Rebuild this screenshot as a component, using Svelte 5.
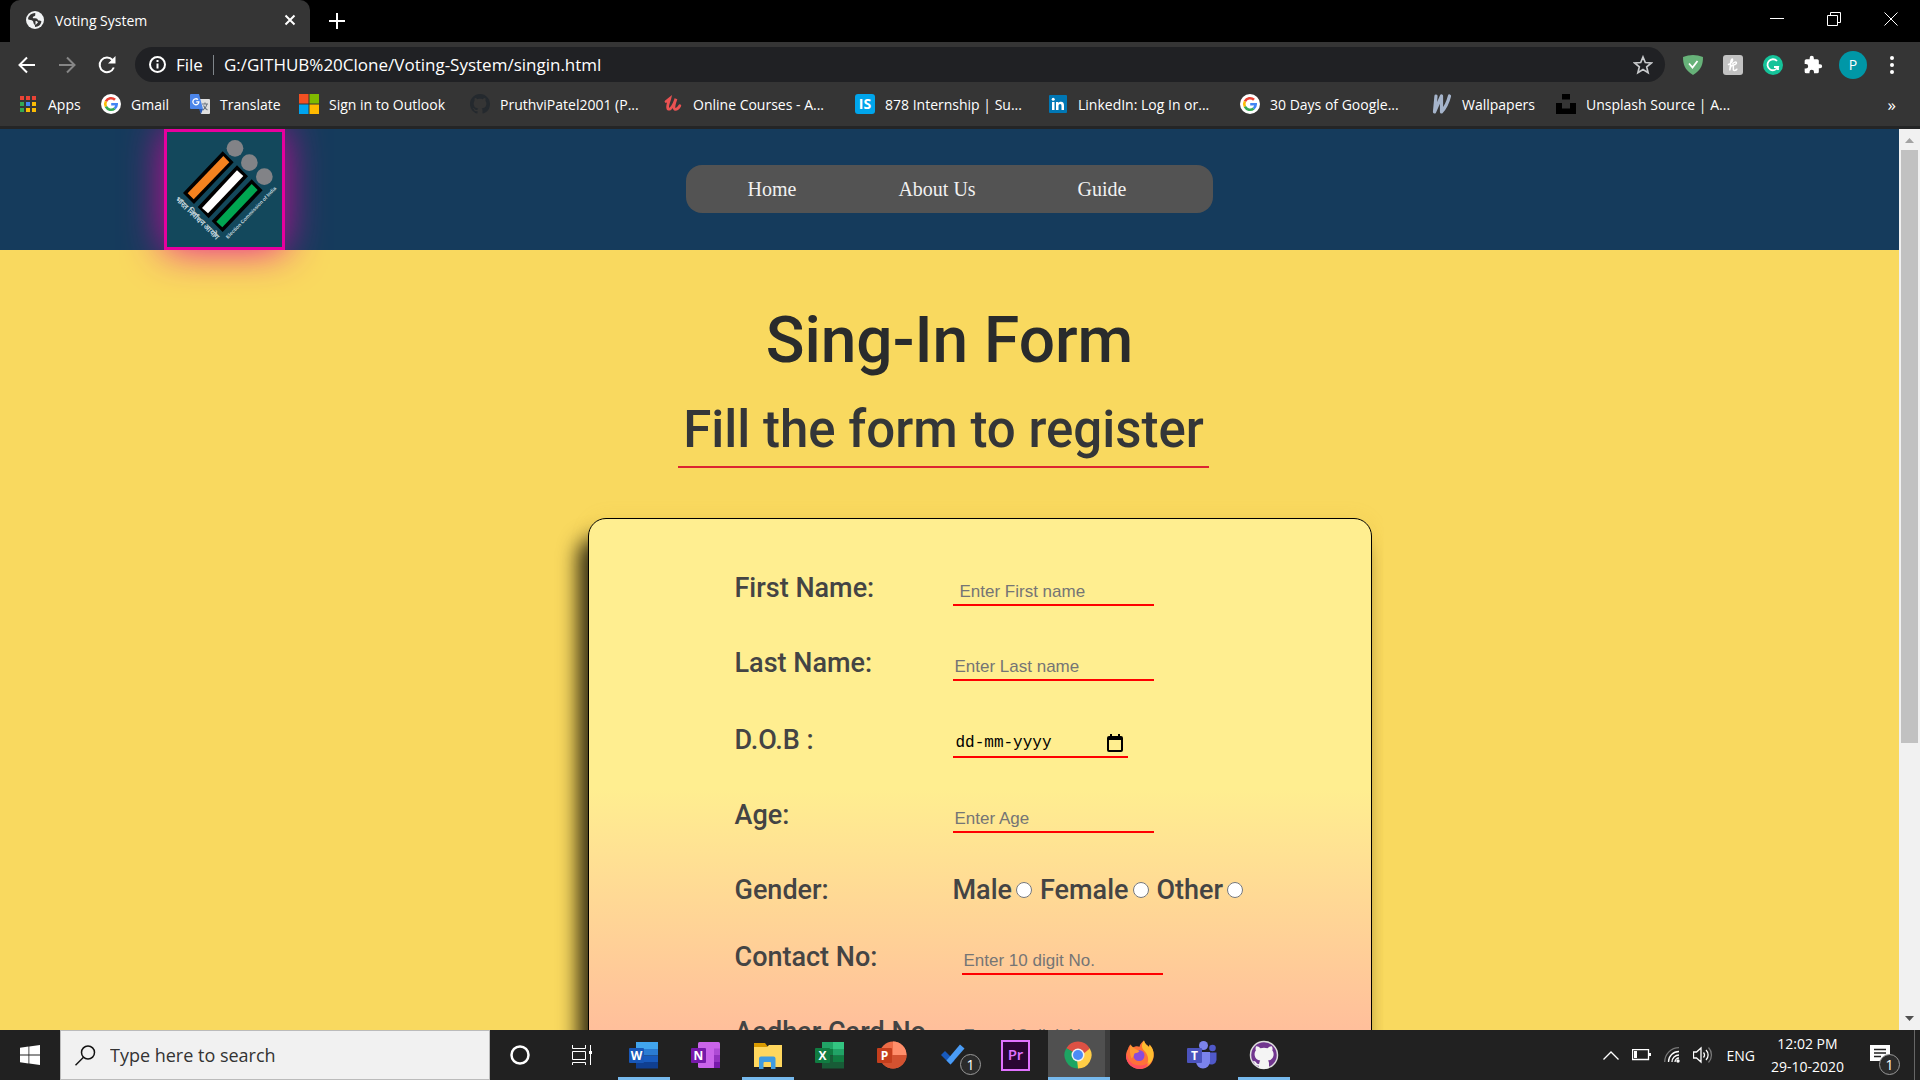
<script>
  const bookmarks = [
    { icon: 'apps', label: 'Apps' },
    { icon: 'google', label: 'Gmail' },
    { icon: 'translate', label: 'Translate' },
    { icon: 'microsoft', label: 'Sign in to Outlook' },
    { icon: 'github', label: 'PruthviPatel2001 (P...' },
    { icon: 'udemy', label: 'Online Courses - A...' },
    { icon: 'internshala', label: '878 Internship | Su...' },
    { icon: 'linkedin', label: 'LinkedIn: Log In or...' },
    { icon: 'google', label: '30 Days of Google...' },
    { icon: 'wallpapers', label: 'Wallpapers' },
    { icon: 'unsplash', label: 'Unsplash Source | A...' },
  ];

  const tasks = [
    { name: 'Word', open: true },
    { name: 'OneNote' },
    { name: 'File Explorer', open: true },
    { name: 'Excel' },
    { name: 'PowerPoint' },
    { name: 'To Do', badge: 1 },
    { name: 'Premiere Pro' },
    { name: 'Chrome', open: true, active: true },
    { name: 'Firefox' },
    { name: 'Teams' },
    { name: 'GitHub Desktop', open: true },
  ];
</script>

{#snippet octocat()}
  <path d="M8 0C3.58 0 0 3.58 0 8c0 3.54 2.29 6.53 5.47 7.59.4.07.55-.17.55-.38 0-.19-.01-.82-.01-1.49-2.01.37-2.53-.49-2.69-.94-.09-.23-.48-.94-.82-1.13-.28-.15-.68-.52-.01-.53.63-.01 1.08.58 1.23.82.72 1.21 1.87.87 2.33.66.07-.52.28-.87.51-1.07-1.78-.2-3.64-.89-3.64-3.95 0-.87.31-1.59.82-2.15-.08-.2-.36-1.02.08-2.12 0 0 .67-.21 2.2.82.64-.18 1.32-.27 2-.27s1.36.09 2 .27c1.53-1.04 2.2-.82 2.2-.82.44 1.1.16 1.92.08 2.12.51.56.82 1.27.82 2.15 0 3.07-1.87 3.75-3.65 3.95.29.25.54.73.54 1.48 0 1.07-.01 1.93-.01 2.2 0 .21.15.46.55.38A8.01 8.01 0 0 0 16 8c0-4.42-3.58-8-8-8z" />
{/snippet}

{#snippet bookmarkIcon(name)}
  <svg class="fav" viewBox="0 0 20 20" aria-hidden="true">
    {#if name === 'apps'}
      <path fill="#ea4335" d="M2 2h4v4H2zM8 2h4v4H8zM14 2h4v4h-4z" />
      <path fill="#34a853" d="M2 8h4v4H2zM2 14h4v4H2z" />
      <path fill="#4285f4" d="M8 8h4v4H8z" />
      <path fill="#fbbc05" d="M14 8h4v4h-4zM8 14h4v4H8zM14 14h4v4h-4z" />
    {:else if name === 'google'}
      <circle cx="10" cy="10" r="10" fill="#fff" />
      <g fill="none" stroke-width="2.6">
        <path stroke="#ea4335" d="M14 5.8A5.8 5.8 0 0 0 4.9 7.3" />
        <path stroke="#fbbc05" d="M4.9 7.3a5.8 5.8 0 0 0 0 5.4" />
        <path stroke="#34a853" d="M4.9 12.7a5.8 5.8 0 0 0 8.8 1.8" />
        <path stroke="#4285f4" d="M13.7 14.5a5.8 5.8 0 0 0 2-4.3h-5.5" />
      </g>
    {:else if name === 'translate'}
      <path fill="#e0e0e0" d="M8 5h11a1 1 0 0 1 1 1v13a1 1 0 0 1-1 1h-8z" />
      <path fill="#4c86ea" d="M1 0h8l4 15H1a1 1 0 0 1-1-1V1a1 1 0 0 1 1-1z" />
      <path fill="#2b59b5" d="M9 15h4l-2 5z" />
      <path fill="none" stroke="#fff" stroke-width="1.3" d="M8 5.6a3 3 0 1 0 .9 2.2H6.2" />
      <path fill="none" stroke="#6b7580" stroke-width="1.1" d="M12 10h6M15 8.6V10M17 10c-.5 3-2 4.5-4 6M13.5 11.5c1 2 2 3.5 4 4.5" />
    {:else if name === 'microsoft'}
      <path fill="#f25022" d="M0 0h9.5v9.5H0z" /><path fill="#7fba00" d="M10.5 0H20v9.5h-9.5z" />
      <path fill="#00a4ef" d="M0 10.5h9.5V20H0z" /><path fill="#ffb900" d="M10.5 10.5H20V20h-9.5z" />
    {:else if name === 'github'}
      <g fill="#24292e" transform="scale(1.25)">{@render octocat()}</g>
    {:else if name === 'udemy'}
      <path fill="none" stroke="#eb5252" stroke-width="2.8" stroke-linecap="round" d="M3 7.5 6.8 4.5C6 8 3.5 12 5 14.8c2.5 2 6-4 8-10C11.5 9 9.8 14 11.8 15.2c1.8.6 3.5-1 5-3.5" />
    {:else if name === 'internshala'}
      <rect width="20" height="20" rx="3" fill="#00a5ec" />
      <text x="10" y="15" text-anchor="middle" class="mark" font-size="14">IS</text>
    {:else if name === 'linkedin'}
      <rect x="1" y="1" width="18" height="18" rx="1" fill="#0077b5" />
      <path fill="#fff" d="M4 8h2.5v8H4zM8 8h2.4v1.2C11 8.3 12 7.8 13 7.8c2.2 0 3 1.4 3 3.8V16h-2.5v-4c0-1.3-.4-2-1.4-2s-1.6.8-1.6 2v4H8z" />
      <circle cx="5.2" cy="5.3" r="1.5" fill="#fff" />
    {:else if name === 'wallpapers'}
      <path fill="none" stroke="#a5b4cb" stroke-width="3.2" stroke-linecap="round" stroke-linejoin="round" d="M4 2 2.5 18 9.5 2 9.5 18C13 14 16 8 17.500 2" />
    {:else}
      <path fill="#000" d="M6 0h8v5.500H6zM0 9h6v5.500h8V9h6v11H0z" />
    {/if}
  </svg>
{/snippet}

{#snippet taskIcon(name)}
  <svg class="app" viewBox="0 0 32 32" aria-hidden="true">
    {#if name === 'Word' || name === 'Excel'}
      {#if name === 'Word'}
        <path fill="#41a5ee" d="M8 3h22v7H8z" /><path fill="#2b7cd3" d="M8 10h22v6.500H8z" />
        <path fill="#185abd" d="M8 16.500h22V23H8z" /><path fill="#103f91" d="M8 23h22v6.500H8z" />
        <rect x="1" y="9" width="15" height="15" rx="1" fill="#1857b8" />
      {:else}
        <path fill="#21a366" d="M8 3h11v7H8z" /><path fill="#33c481" d="M19 3h11v7H19z" />
        <path fill="#107c41" d="M8 10h11v6.500H8zM19 16.500h11V23H19z" /><path fill="#21a366" d="M19 10h11v6.500H19z" />
        <path fill="#185c37" d="M8 16.500h11V23H8zM8 23h22v6.500H8z" />
        <rect x="1" y="9" width="15" height="15" rx="1" fill="#107c41" />
      {/if}
      <text x="8.5" y="21" text-anchor="middle" class="mark" font-size="12">{name === 'Word' ? 'W' : 'X'}</text>
    {:else if name === 'OneNote'}
      <rect x="8" y="3" width="22" height="26" rx="1.5" fill="#ca64ea" />
      <path fill="#ae4bd5" d="M24 9.500h6V16h-6z" /><path fill="#9332bf" d="M24 16h6v6.500h-6z" /><path fill="#7719aa" d="M24 22.500h6V29h-6z" />
      <rect x="1" y="9" width="15" height="15" rx="1" fill="#7719aa" />
      <text x="8.5" y="21" text-anchor="middle" class="mark" font-size="12">N</text>
    {:else if name === 'File Explorer'}
      <path fill="#d99a00" d="M2 4h11l3 4v5H2z" /><path fill="#ffd75e" d="M2 8h13l2-2h13v22H2z" />
      <path fill="#3f9be0" d="M7 30V19.500a2 2 0 0 1 2-2h12.500a2 2 0 0 1 2 2V30h-4.500v-6a1 1 0 0 0-1-1h-5.500a1 1 0 0 0-1 1v6z" />
    {:else if name === 'PowerPoint'}
      <circle cx="17" cy="16" r="13.500" fill="#ed6c47" /><path fill="#ff8f6b" d="M17 2.500A13.500 13.500 0 0 1 30.500 16H17z" />
      <path fill="#d35230" d="M3.500 16h27a13.500 13.500 0 0 1-27 0z" />
      <rect x="1" y="9" width="15" height="15" rx="1" fill="#c43e1c" />
      <text x="8.5" y="21" text-anchor="middle" class="mark" font-size="12">P</text>
    {:else if name === 'To Do'}
      <path fill="#185abd" d="m3 16 4-4 9.500 9.500-4 4z" />
      <path fill="#4a9cf5" d="m12.500 25.500 14-16-4.500-4L8.500 21.500z" />
    {:else if name === 'Premiere Pro'}
      <rect x="2" y="2" width="27" height="29" fill="#2a0634" stroke="#e072ff" stroke-width="2" />
      <text x="15.5" y="21" text-anchor="middle" class="mark pr" font-size="15">Pr</text>
    {:else if name === 'Chrome'}
      <path fill="#dd5144" d="M16 16 4.300 9.200a13.500 13.500 0 0 1 23.400 0z" />
      <path fill="#ffcd46" d="M16 16 27.700 9.200A13.500 13.500 0 0 1 16 29.500z" />
      <path fill="#1da462" d="M16 16v13.500A13.500 13.500 0 0 1 4.300 9.200z" />
      <path fill="#dd5144" d="M16 9.500h11.800L20 16z" /><path fill="#ffcd46" d="m21.800 19-5.800 10.500-1-9z" /><path fill="#1da462" d="m10.200 19L4.300 9.200 12 14z" />
      <circle cx="16" cy="16" r="6.500" fill="#f1f1f1" /><circle cx="16" cy="16" r="5" fill="#4c8bf5" />
    {:else if name === 'Firefox'}
      <path fill="#ff7139" d="M4 10c.5-2 1.500-3.500 2.500-4.500.3 1.500 1 2.500 2 3.200 2-1.500 5-2 7-1C16 5 18 3 20 1.500c.5 3 3 4.500 5 6.500.5-.8.6-1.700.5-2.500 3 3 4.500 7 4.200 11.500C29.300 24 23.500 30 16 30S2 24 2 17c0-2.500.8-5 2-7z" />
      <path fill="#ffbd2f" d="M20 1.500c.5 3 3 4.500 5 6.500.5-.8.6-1.700.5-2.500 3.500 3.500 5 8.500 3.700 13.500-1.200 4-4.200 7-7.700 8.500 3.500-4 4-10-1-15.500-3.500-3-3-7.500-.5-10.500z" />
      <path fill="#ff4f5e" d="M2.300 14c1.500 8 6 12.500 14 12.500 4 0 7-1.500 9-3.500C23 27.500 19.500 30 16 30 8.500 30 2 24 2 17z" />
      <circle cx="15" cy="16.500" r="5.500" fill="#8a4bdb" /><path fill="#ff9a35" d="M6.500 5.500C8 8 11 10 15.500 12c-1 1.500-3 2-5 2.500-1 3.500-2 4-3 5C5.500 15 5.500 10 6.500 5.500z" />
    {:else if name === 'Teams'}
      <circle cx="26.500" cy="9" r="3.300" fill="#5059c9" /><circle cx="17.500" cy="6.500" r="4.500" fill="#7b83eb" />
      <path fill="#5059c9" d="M22 13.500h8.500V21a5 5 0 0 1-8.500 3z" /><path fill="#7b83eb" d="M10 13h14v9.500a7 7 0 0 1-14 0z" />
      <rect x="1" y="9" width="15" height="15" rx="1" fill="#4b53bc" />
      <text x="8.5" y="21" text-anchor="middle" class="mark" font-size="12">T</text>
    {:else}
      <circle cx="16" cy="16" r="13.500" fill="#71368f" stroke="#ddd" stroke-width="1.5" />
      <path fill="#f4f4f4" d="M8 7.500c1.500-.5 3 .5 4.500 1.700a14 14 0 0 1 7 0C21 8 22.500 7 24 7.500c.8 1.500.6 3 .3 4 1.200 1.500 1.500 3 1.200 5-.5 3-2.500 4.500-5.500 5 .8 1 1 2 1 3.200V29a14 14 0 0 1-10 0v-2.300c-2.800.3-4-1-4.700-3-.3-.7-.8-1-1.300-1.500 2-.5 3 1 3.700 2 .6.8 1.500.8 2.500.5.1-1.200.4-2 1-3.200-3-.5-5-2-5.500-5-.3-2 0-3.500 1.200-5-.4-1-.5-2.500.1-4z" />
    {/if}
  </svg>
{/snippet}

<div class="screen">
  <header class="browser">
    <div class="tabs">
      <div class="tab">
        <svg class="globe" viewBox="0 0 18 18" aria-hidden="true">
          <circle cx="9" cy="9" r="9" fill="#f1f3f4" />
          <path fill="#353535" d="M9.500 2c-1 1.300.5 1.700-.5 2.700-1 .8-2 .5-2.200 1.500-.1 1 1 1.200 2.200 1.100 1.800-.1 2.800.7 3 2 1 .2 2 .2 3.500 1.200A7 7 0 0 1 9 16c0-1.500 0-2-1-3-.9-1-.3-2-1.200-3C5.600 8.700 3.800 9 2 8.200A7 7 0 0 1 9.500 2z" />
          <path fill="#f1f3f4" d="M9.500 10c1 0 2 .5 2.500 1.300-.5 1.200-1.500 1.400-2.500 2.700z" />
        </svg>
        <span class="tab-title">Voting System</span>
        <button class="bare" aria-label="Close tab"><svg width="12" height="12" viewBox="0 0 12 12"><path class="line" d="m1.500 1.500 9 9M10.500 1.500l-9 9" /></svg></button>
      </div>
      <button class="bare new-tab" aria-label="New tab"><svg width="16" height="16" viewBox="0 0 16 16"><path class="line" d="M8 0v16M0 8h16" /></svg></button>
      <div class="window-buttons">
        <button class="bare" aria-label="Minimize"><svg width="14" height="14" viewBox="0 0 14 14"><path class="thin" d="M0 6.500h14" /></svg></button>
        <button class="bare" aria-label="Restore"><svg width="14" height="14" viewBox="0 0 14 14"><path class="thin" d="M.5 3.500h10v10H.5zM3.500 3.500v-3h10v10h-3" /></svg></button>
        <button class="bare" aria-label="Close"><svg width="14" height="14" viewBox="0 0 14 14"><path class="thin" d="m.5.5 13 13M13.500.5l-13 13" /></svg></button>
      </div>
    </div>

    <div class="toolbar">
      <button class="bare" aria-label="Back"><svg width="18" height="18" viewBox="0 0 18 18"><path class="line" d="M17 9H2M9 1.500 1.500 9 9 16.500" /></svg></button>
      <button class="bare dim" aria-label="Forward"><svg width="18" height="18" viewBox="0 0 18 18"><path class="line" d="M1 9h15M9 1.500 16.500 9 9 16.500" /></svg></button>
      <button class="bare" aria-label="Reload"><svg width="18" height="18" viewBox="0 0 18 18"><path class="line" d="M15.800 11.500A7.300 7.300 0 1 1 14.500 4" /><path fill="#fff" d="M17.500 0v7.500H10z" /></svg></button>
      <div class="address">
        <svg width="17" height="17" viewBox="0 0 17 17" aria-hidden="true"><circle class="line" cx="8.5" cy="8.5" r="7.5" /><path class="line" d="M8.500 7.500v5M8.500 4v2" /></svg>
        <span>File</span>
        <i class="divider"></i>
        <input aria-label="Address" value="G:/GITHUB%20Clone/Voting-System/singin.html" />
        <button class="bare" aria-label="Bookmark this page"><svg width="20" height="20" viewBox="0 0 20 20"><path fill="none" stroke="#c8cacc" stroke-width="1.7" d="m10 2 2.300 5.500 6 .5-4.600 3.900 1.400 5.800L10 14.600l-5.100 3.100 1.400-5.800L1.700 8l6-.5z" /></svg></button>
      </div>
      <div class="extensions">
        <button class="bare" aria-label="AdGuard"><svg width="20" height="20" viewBox="0 0 20 20"><path fill="#67b279" d="M10 0c3 0 7 .7 10 2 0 7-1.500 13-10 18C1.500 15 0 9 0 2 3 .7 7 0 10 0z" /><path fill="none" stroke="#fff" stroke-width="1.8" d="m6 8.500 3.500 4L14.500 6" /></svg></button>
        <button class="bare" aria-label="Honey"><svg width="20" height="20" viewBox="0 0 20 20"><rect width="20" height="20" rx="3" fill="#c2c2c2" /><path fill="none" stroke="#fff" stroke-width="1.5" stroke-linecap="round" d="M5.500 9.500C8.500 8.500 10 6 9.500 4.200 7.800 3.500 7.500 9 6.800 15.500c.5-3 1.500-5.200 2.700-5.200 1.300 0 .7 3 .9 4.700.9 1 2.500.3 3.400-.8M9.800 8.600C11 7 13 6.600 13.400 7.500s-1 2.300-2.600 2.500" /></svg></button>
        <button class="bare" aria-label="Grammarly"><svg width="20" height="20" viewBox="0 0 20 20"><circle cx="10" cy="10" r="10" fill="#15c39a" /><path fill="none" stroke="#fff" stroke-width="1.8" d="M14 6a5.500 5.500 0 1 0 1 6h-4M15 11v4" /></svg></button>
        <button class="bare" aria-label="Extensions"><svg width="20" height="20" viewBox="0 0 24 24"><path fill="#fff" d="M20.500 11H19V7a2 2 0 0 0-2-2h-4V3.500a2.500 2.500 0 0 0-5 0V5H4a2 2 0 0 0-2 2v3.800h1.500a2.700 2.700 0 0 1 0 5.400H2V20a2 2 0 0 0 2 2h3.800v-1.500a2.700 2.700 0 0 1 5.400 0V22H17a2 2 0 0 0 2-2v-4h1.500a2.500 2.500 0 0 0 0-5z" /></svg></button>
        <button class="avatar" aria-label="Profile">P</button>
        <button class="bare" aria-label="Menu"><svg width="4" height="18" viewBox="0 0 4 18"><circle cx="2" cy="2" r="2" fill="#fff" /><circle cx="2" cy="9" r="2" fill="#fff" /><circle cx="2" cy="16" r="2" fill="#fff" /></svg></button>
      </div>
    </div>

    <nav class="bookmarks" aria-label="Bookmarks">
      {#each bookmarks as item}
        <a href="#bookmark">{@render bookmarkIcon(item.icon)}<span>{item.label}</span></a>
      {/each}
      <button class="bare more" aria-label="More bookmarks">»</button>
    </nav>
  </header>

  <div class="viewport">
    <div class="page">
      <header class="site-header">
        <a class="emblem" href="#home" aria-label="Election Commission of India">
          <svg viewBox="141 36 345 345" aria-hidden="true">
            <g fill="#828387"><circle cx="345" cy="85" r="25" /><circle cx="388" cy="128" r="25" /><circle cx="433" cy="170" r="25" /></g>
            <path fill="#000" d="m308 94 33 33-119 125-33-33zM351 136l33 33-118 126-33-34zM395 178l33 33-120 125-33-33z" />
            <path fill="#f5821f" d="m310 108 18 19-107 111-18-18z" />
            <path fill="#fff" d="m351 151 19 17-106 112-18-16z" />
            <path fill="#00a651" d="m395 192 18 18-106 112-18-17z" />
            <text class="caption" transform="translate(165 240) rotate(44)" font-size="23">भारत निर्वाचन आयोग</text>
            <text class="caption" transform="translate(324 357) rotate(-46)" font-size="15">Election Commission of India</text>
          </svg>
        </a>
        <nav class="site-nav">
          <a href="#home">Home</a>
          <a href="#about">About Us</a>
          <a href="#guide">Guide</a>
        </nav>
      </header>

      <main>
        <h1>Sing-In Form</h1>
        <h2>Fill the form to register</h2>

        <form>
          <label for="first">First Name:</label>
          <input class="field padded" id="first" placeholder="Enter First name" />
          <label for="last">Last Name:</label>
          <input class="field" id="last" placeholder="Enter Last name" />
          <label for="dob">D.O.B :</label>
          <div class="field date">
            <input id="dob" placeholder="dd-mm-yyyy" />
            <button type="button" class="bare" aria-label="Choose date"><svg width="16" height="18" viewBox="0 0 16 18"><path fill="#000" fill-rule="evenodd" d="M2 2h1V0h2v2h6V0h2v2h1a2 2 0 0 1 2 2v12a2 2 0 0 1-2 2H2a2 2 0 0 1-2-2V4a2 2 0 0 1 2-2zm0 4v10h12V6z" /></svg></button>
          </div>
          <label for="age">Age:</label>
          <input class="field" id="age" placeholder="Enter Age" />
          <span id="gender">Gender:</span>
          <div class="choices" role="radiogroup" aria-labelledby="gender">
            <label>Male<input type="radio" name="gender" /></label>
            <label>Female<input type="radio" name="gender" /></label>
            <label>Other<input type="radio" name="gender" /></label>
          </div>
          <label for="contact">Contact No:</label>
          <input class="field indented" id="contact" placeholder="Enter 10 digit No." />
          <label for="aadhar">Aadhar Card No</label>
          <input class="field indented" id="aadhar" placeholder="Enter 12 digit No." />
        </form>
      </main>
    </div>

    <div class="scrollbar" aria-hidden="true">
      <svg width="9" height="5" viewBox="0 0 9 5"><path fill="#a3a3a3" d="M0 5 4.500 0 9 5z" /></svg>
      <div class="track"><div class="thumb"></div></div>
      <svg width="9" height="5" viewBox="0 0 9 5"><path fill="#505050" d="M0 0h9L4.500 5z" /></svg>
    </div>
  </div>

  <footer class="taskbar">
    <button class="bare start" aria-label="Start"><svg width="20" height="20" viewBox="0 0 20 20"><path fill="#fff" d="m0 2.800 8.500-1.200v8H0zM9.300 1.500 20 0v9.600H9.300zM0 10.400h8.500v8L0 17.200zM9.300 10.400H20V20L9.300 18.500z" /></svg></button>
    <label class="search">
      <svg width="21" height="21" viewBox="0 0 21 21" aria-hidden="true"><circle cx="13" cy="7.500" r="6.500" fill="none" stroke="#111" stroke-width="1.5" /><path stroke="#111" stroke-width="1.5" d="m8.500 12.200-8 8" /></svg>
      <input placeholder="Type here to search" aria-label="Type here to search" />
    </label>
    <button class="bare task" aria-label="Cortana"><svg width="20" height="20" viewBox="0 0 20 20"><circle cx="10" cy="10" r="8.500" fill="none" stroke="#fff" stroke-width="2.5" /></svg></button>
    <button class="bare task" aria-label="Task view"><svg width="20" height="20" viewBox="0 0 20 20"><path class="thin" d="M.5 0v3.500h13V0M.5 6.500h13v8H.5zM.5 20v-2.500h13V20M18.500 0v20" /><path fill="#fff" d="M17 6h3v3h-3z" /></svg></button>
    {#each tasks as task}
      <button class="bare task" class:open={task.open} class:active={task.active} aria-label={task.name}>
        {@render taskIcon(task.name)}
        {#if task.badge}<span class="badge">{task.badge}</span>{/if}
      </button>
    {/each}

    <div class="tray">
      <svg width="16" height="9" viewBox="0 0 16 9" aria-hidden="true"><path class="tray-line" d="m.5 8.500 7.500-7.500 7.500 7.500" /></svg>
      <svg width="19" height="12" viewBox="0 0 19 12" aria-hidden="true"><path class="tray-line" d="M.5.5h16v10H.5z" /><path fill="#fff" d="M2 2h3v7H2zM17 4h2v3h-2z" /></svg>
      <svg width="16" height="16" viewBox="0 0 16 16" aria-hidden="true"><g class="tray-line"><path stroke="#777" d="M.7 15A14.300 14.300 0 0 1 15 .7" /><path d="M4.500 15A10.500 10.500 0 0 1 15 4.500M8 15a7 7 0 0 1 7-7" /><path d="M11 15a4 4 0 0 1 4-4" /></g><circle cx="14" cy="14" r="1.7" fill="#fff" /></svg>
      <svg width="20" height="18" viewBox="0 0 20 18" aria-hidden="true"><g class="tray-line"><path d="M.5 6h3L8 2v14l-4.500-4h-3zM10.500 6.500a4 4 0 0 1 0 5M13 4a7 7 0 0 1 0 10" /><path stroke="#777" d="M15.500 1.500a11 11 0 0 1 0 15" /></g></svg>
      <span class="lang">ENG</span>
      <time class="clock" datetime="2020-10-29T12:02"><span>12:02 PM</span><span>29-10-2020</span></time>
      <button class="bare notices" aria-label="Notifications">
        <svg width="20" height="20" viewBox="0 0 20 20"><path fill="#fff" d="M0 0h20v16h-6v4l-4-4H0z" /><path stroke="#222" stroke-width="1.3" d="M4 4.500h12M4 8h12M4 11.500h7" /></svg>
        <span class="badge">1</span>
      </button>
    </div>
  </footer>
</div>

<style>
  :global(body) { margin: 0; }
  * { box-sizing: border-box; }
  .screen {
    display: flex;
    flex-direction: column;
    height: 100vh;
    overflow: hidden;
    font-family: "Open Sans", "Noto Sans", sans-serif;
    color: #fff;
  }
  .bare {
    display: flex;
    align-items: center;
    justify-content: center;
    padding: 0;
    border: 0;
    background: none;
    color: inherit;
    font: inherit;
  }
  a { color: inherit; text-decoration: none; }
  input { font: inherit; border: 0; background: none; outline: 0; margin: 0; }
  svg { display: block; flex: none; }
  .line { fill: none; stroke: #fff; stroke-width: 2; }
  .thin { fill: none; stroke: #fff; stroke-width: 1; }
  .mark { fill: #fff; font-family: "Open Sans", sans-serif; font-weight: 700; }
  .pr { fill: #e072ff; font-weight: 600; }

  .browser { flex: none; background: #353535; border-bottom: 3px solid #242526; }
  .tabs { display: flex; align-items: center; height: 42px; padding-left: 10px; background: #000; }
  .tab {
    display: flex;
    align-items: center;
    gap: 11px;
    width: 300px;
    height: 42px;
    padding: 0 14px 2px 16px;
    border-radius: 10px 10px 0 0;
    background: #353535;
    font-size: 14px;
  }
  .globe { width: 18px; height: 18px; }
  .tab-title { flex: 1; }
  .new-tab { margin-left: 19px; }
  .window-buttons { display: flex; gap: 43px; margin: 0 22px 4px auto; }

  .toolbar { display: flex; align-items: center; height: 45px; padding: 0 26px 0 18px; gap: 22px; }
  .dim { opacity: 0.4; }
  .address {
    display: flex;
    align-items: center;
    gap: 10px;
    flex: 1;
    height: 35px;
    margin-left: -3px;
    padding: 0 12px 0 14px;
    border-radius: 18px;
    background: #202124;
    font-size: 17px;
  }
  .address input { flex: 1; padding: 0; color: #fff; }
  .divider { width: 1px; height: 20px; background: #80868b; }
  .extensions { display: flex; align-items: center; gap: 20px; margin-left: -4px; }
  .avatar {
    width: 28px;
    height: 28px;
    margin: 0 3px 0 -4px;
    padding: 0;
    border: 0;
    border-radius: 50%;
    background: #0097a7;
    color: #fff;
    font: 14px "Open Sans", sans-serif;
  }

  .bookmarks {
    display: grid;
    grid-template-columns: 83px 89px 109px 171px 193px 192px 193px 192px 192px 124px 1fr auto;
    align-items: center;
    height: 39px;
    padding: 0 24px 5px 18px;
    font-size: 14px;
    white-space: nowrap;
  }
  .bookmarks a { display: flex; align-items: center; gap: 10px; }
  .more { font-size: 17px; }
  .fav { width: 20px; height: 20px; overflow: visible; }

  .viewport { display: flex; flex: 1; min-height: 0; }
  .page { flex: 1; min-width: 0; overflow: hidden; background: #f9d95f; color: #444; }
  .site-header { display: grid; grid-template-columns: 1fr auto 1fr; height: 121px; padding: 0 164px; background: #153b5c; }
  .emblem {
    width: 121px;
    height: 121px;
    border: 3px solid #e6009e;
    background: #13485c;
    box-shadow: 0 0 40px rgba(230, 0, 158, 0.9);
  }
  .emblem svg { width: 100%; }
  .caption { fill: #c5d6dc; font-family: "Liberation Sans", sans-serif; font-weight: 700; }
  .site-nav {
    display: flex;
    align-items: center;
    gap: 102px;
    height: 48px;
    margin-top: 36px;
    padding: 0 86px 0 61px;
    border-radius: 16px;
    background: #535353;
    color: #f1f1f1;
    font: 20px "Liberation Serif", serif;
  }
  main { display: flex; flex-direction: column; align-items: center; }
  h1, h2, form { font-family: Roboto, sans-serif; font-weight: 500; }
  h1 { margin: 51px 0 0; font-size: 64px; line-height: 80px; color: #292b2c; }
  h2 {
    margin: 20px 12px 50px 0;
    padding: 0 5px 7px;
    border-bottom: 2px solid #dc2531;
    font-size: 51px;
    line-height: 58px;
    color: #343638;
  }
  form {
    display: grid;
    grid-template-columns: 218px 1fr;
    grid-template-rows: 54px 75px 77px 75px 75px 67px 75px;
    align-items: end;
    width: 784px;
    height: 900px;
    margin-left: 60px;
    padding: 33px 60px 0 146px;
    border: 1px solid #000;
    border-radius: 18px;
    background: linear-gradient(#ffee90 0, #ffee90 270px, #ffbf9b 510px);
    box-shadow: -10px 20px 20px rgba(0, 0, 0, 0.8), 0 0 20px rgba(200, 160, 40, 0.1);
    clip-path: inset(-40px -12px 0 -60px);
    font-size: 27px;
    line-height: 36px;
    white-space: nowrap;
  }
  .field {
    width: 201px;
    height: 31px;
    padding: 5px 2px 0;
    border-bottom: 2px solid #f00;
    font: 17px "Liberation Sans", sans-serif;
    color: #000;
  }
  .field::placeholder { color: #757575; }
  .padded { padding-left: 7px; }
  .indented { margin-left: 9px; }
  .date { display: flex; align-items: center; justify-content: space-between; width: 175px; padding: 3px 5px 0 2px; }
  .date input { width: 110px; padding: 0 0 0 1px; font: 16px "Liberation Mono", monospace; }
  .date input::placeholder { color: #000; }
  .choices { display: flex; gap: 8px; }
  .choices label { display: flex; align-items: center; gap: 4px; }
  .choices input { width: 16px; height: 16px; }

  .scrollbar { display: flex; flex-direction: column; align-items: center; width: 21px; padding: 9px 0; background: #f1f1f1; }
  .track { flex: 1; width: 17px; padding: 7px 0; }
  .thumb { height: 69%; background: #c1c1c1; }

  .taskbar { display: flex; flex: none; height: 50px; background: #212121; }
  .start { width: 60px; }
  .search {
    display: flex;
    align-items: center;
    gap: 14px;
    width: 430px;
    padding: 0 14px;
    border: 1px solid #bbb;
    background: #f1f1f1;
  }
  .search input { flex: 1; padding: 0; font-size: 18px; }
  .search input::placeholder { color: #333; }
  .task { position: relative; width: 62px; padding-right: 2px; }
  .app { width: 32px; height: 32px; }
  .open::after {
    content: "";
    position: absolute;
    bottom: 0;
    width: 52px;
    height: 3px;
    background: #76b9ed;
  }
  .active { background: #505050; box-shadow: inset -5px 0 #3c3c3c; }
  .active::after { width: 62px; left: 0; }
  .badge {
    position: absolute;
    right: 5px;
    bottom: 5px;
    width: 21px;
    height: 21px;
    border: 1px solid #999;
    border-radius: 50%;
    background: #2b2b2b;
    font-size: 14px;
    line-height: 19px;
    text-align: center;
  }
  .tray { display: flex; align-items: center; gap: 13px; margin-left: auto; padding-right: 5px; font-size: 14px; }
  .tray-line { fill: none; stroke: #fff; stroke-width: 1.3; }
  .lang { margin-right: 3px; }
  .clock { display: flex; flex-direction: column; align-items: center; line-height: 23px; }
  .notices { position: relative; width: 58px; height: 50px; padding-right: 12px; border-right: 1px solid #666; }
  .notices .badge { right: 14px; }
</style>
